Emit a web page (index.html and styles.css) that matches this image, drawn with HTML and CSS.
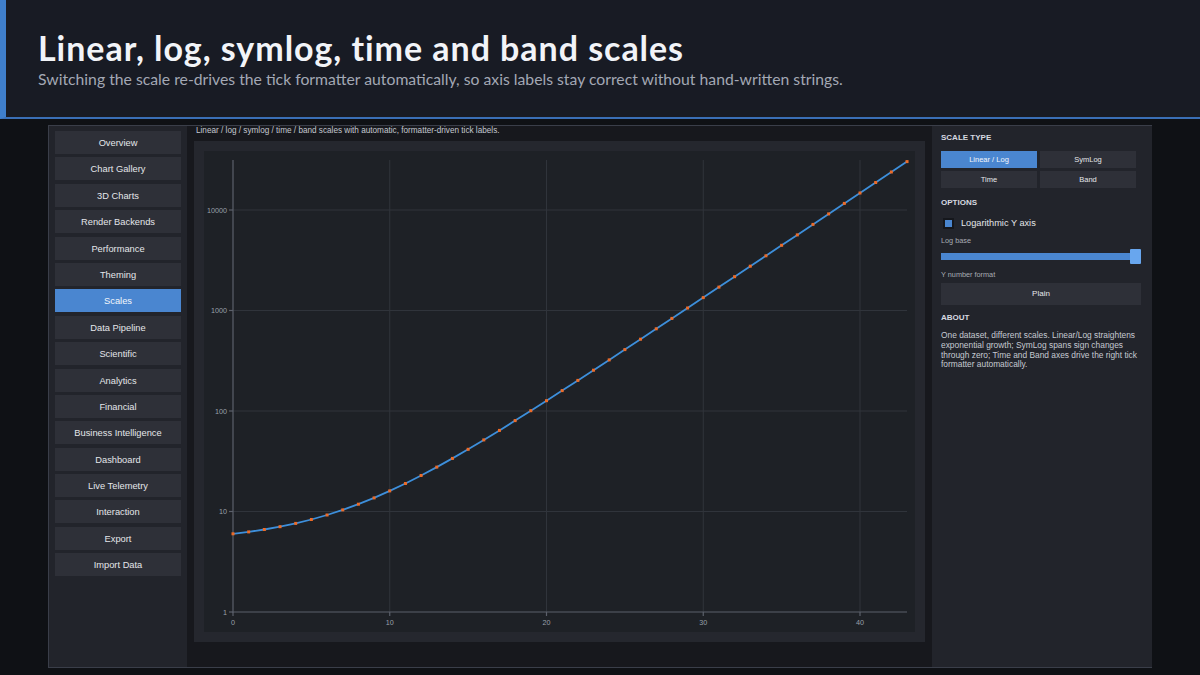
FILE: index.html
```html
<!DOCTYPE html>
<html>
<head>
<meta charset="utf-8">
<title>Scales</title>
<link rel="stylesheet" href="styles.css">
</head>
<body>
<header class="hero">
  <h1 class="hero-title">Linear, log, symlog, time and band scales</h1>
  <p class="hero-sub">Switching the scale re-drives the tick formatter automatically, so axis labels stay correct without hand-written strings.</p>
</header>
<div class="window">
  <nav class="sidebar">
    <div class="nav-btn">Overview</div>
    <div class="nav-btn">Chart Gallery</div>
    <div class="nav-btn">3D Charts</div>
    <div class="nav-btn">Render Backends</div>
    <div class="nav-btn">Performance</div>
    <div class="nav-btn">Theming</div>
    <div class="nav-btn active">Scales</div>
    <div class="nav-btn">Data Pipeline</div>
    <div class="nav-btn">Scientific</div>
    <div class="nav-btn">Analytics</div>
    <div class="nav-btn">Financial</div>
    <div class="nav-btn">Business Intelligence</div>
    <div class="nav-btn">Dashboard</div>
    <div class="nav-btn">Live Telemetry</div>
    <div class="nav-btn">Interaction</div>
    <div class="nav-btn">Export</div>
    <div class="nav-btn">Import Data</div>
  </nav>
  <main class="main">
    <div class="caption">Linear / log / symlog / time / band scales with automatic, formatter-driven tick labels.</div>
    <div class="chart-panel">
      <svg class="plot" width="711" height="481" viewBox="0 0 711 481">
        <g class="grid">
          <line x1="29" y1="59" x2="703" y2="59"/>
          <line x1="29" y1="159.5" x2="703" y2="159.5"/>
          <line x1="29" y1="260" x2="703" y2="260"/>
          <line x1="29" y1="360.5" x2="703" y2="360.5"/>
          <line x1="185.75" y1="9" x2="185.75" y2="461"/>
          <line x1="342.5" y1="9" x2="342.5" y2="461"/>
          <line x1="499.25" y1="9" x2="499.25" y2="461"/>
          <line x1="656" y1="9" x2="656" y2="461"/>
        </g>
        <g class="axis">
          <line x1="29" y1="9" x2="29" y2="461.5"/>
          <line x1="28.5" y1="461" x2="703" y2="461"/>
          <line x1="25" y1="59" x2="29" y2="59"/>
          <line x1="25" y1="159.5" x2="29" y2="159.5"/>
          <line x1="25" y1="260" x2="29" y2="260"/>
          <line x1="25" y1="360.5" x2="29" y2="360.5"/>
          <line x1="25" y1="461" x2="29" y2="461"/>
          <line x1="29" y1="461" x2="29" y2="465"/>
          <line x1="185.75" y1="461" x2="185.75" y2="465"/>
          <line x1="342.5" y1="461" x2="342.5" y2="465"/>
          <line x1="499.25" y1="461" x2="499.25" y2="465"/>
          <line x1="656" y1="461" x2="656" y2="465"/>
        </g>
        <g class="ticklabels ylabels">
          <text x="23" y="61.6">10000</text>
          <text x="23" y="162.1">1000</text>
          <text x="23" y="262.6">100</text>
          <text x="23" y="363.1">10</text>
          <text x="23" y="463.6">1</text>
        </g>
        <g class="ticklabels xlabels">
          <text x="29" y="474">0</text>
          <text x="185.75" y="474">10</text>
          <text x="342.5" y="474">20</text>
          <text x="499.25" y="474">30</text>
          <text x="656" y="474">40</text>
        </g>
        <polyline class="series" points="29,382.8 44.68,380.9 60.35,378.5 76.03,375.7 91.7,372.4 107.38,368.5 123.05,364 138.73,358.9 154.4,353.2 170.08,346.9 185.75,339.9 201.43,332.5 217.1,324.5 232.78,316.1 248.45,307.4 264.13,298.3 279.8,288.9 295.48,279.4 311.15,269.6 326.83,259.7 342.5,249.7 358.18,239.6 373.85,229.4 389.53,219.2 405.2,208.9 420.88,198.6 436.55,188.2 452.23,177.8 467.9,167.4 483.58,157 499.25,146.6 514.93,136.1 530.6,125.7 546.28,115.2 561.95,104.8 577.63,94.3 593.3,83.9 608.98,73.4 624.65,62.9 640.33,52.4 656,42 671.68,31.5 687.35,21 703.03,10.6"/>
        <g class="markers">
          <rect x="27.5" y="381.3" width="3" height="3"/>
          <rect x="43.18" y="379.4" width="3" height="3"/>
          <rect x="58.85" y="377" width="3" height="3"/>
          <rect x="74.53" y="374.2" width="3" height="3"/>
          <rect x="90.2" y="370.9" width="3" height="3"/>
          <rect x="105.88" y="367" width="3" height="3"/>
          <rect x="121.55" y="362.5" width="3" height="3"/>
          <rect x="137.23" y="357.4" width="3" height="3"/>
          <rect x="152.9" y="351.7" width="3" height="3"/>
          <rect x="168.58" y="345.4" width="3" height="3"/>
          <rect x="184.25" y="338.4" width="3" height="3"/>
          <rect x="199.93" y="331" width="3" height="3"/>
          <rect x="215.6" y="323" width="3" height="3"/>
          <rect x="231.28" y="314.6" width="3" height="3"/>
          <rect x="246.95" y="305.9" width="3" height="3"/>
          <rect x="262.63" y="296.8" width="3" height="3"/>
          <rect x="278.3" y="287.4" width="3" height="3"/>
          <rect x="293.98" y="277.9" width="3" height="3"/>
          <rect x="309.65" y="268.1" width="3" height="3"/>
          <rect x="325.33" y="258.2" width="3" height="3"/>
          <rect x="341" y="248.2" width="3" height="3"/>
          <rect x="356.68" y="238.1" width="3" height="3"/>
          <rect x="372.35" y="227.9" width="3" height="3"/>
          <rect x="388.03" y="217.7" width="3" height="3"/>
          <rect x="403.7" y="207.4" width="3" height="3"/>
          <rect x="419.38" y="197.1" width="3" height="3"/>
          <rect x="435.05" y="186.7" width="3" height="3"/>
          <rect x="450.73" y="176.3" width="3" height="3"/>
          <rect x="466.4" y="165.9" width="3" height="3"/>
          <rect x="482.08" y="155.5" width="3" height="3"/>
          <rect x="497.75" y="145.1" width="3" height="3"/>
          <rect x="513.43" y="134.6" width="3" height="3"/>
          <rect x="529.1" y="124.2" width="3" height="3"/>
          <rect x="544.78" y="113.7" width="3" height="3"/>
          <rect x="560.45" y="103.3" width="3" height="3"/>
          <rect x="576.13" y="92.8" width="3" height="3"/>
          <rect x="591.8" y="82.4" width="3" height="3"/>
          <rect x="607.48" y="71.9" width="3" height="3"/>
          <rect x="623.15" y="61.4" width="3" height="3"/>
          <rect x="638.83" y="50.9" width="3" height="3"/>
          <rect x="654.5" y="40.5" width="3" height="3"/>
          <rect x="670.18" y="30" width="3" height="3"/>
          <rect x="685.85" y="19.5" width="3" height="3"/>
          <rect x="701.53" y="9.1" width="3" height="3"/>
        </g>
      </svg>
    </div>
  </main>
  <aside class="inspector">
    <div class="section-title first">SCALE TYPE</div>
    <div class="seg-grid">
      <div class="seg-btn active">Linear / Log</div>
      <div class="seg-btn">SymLog</div>
      <div class="seg-btn">Time</div>
      <div class="seg-btn">Band</div>
    </div>
    <div class="section-title options">OPTIONS</div>
    <div class="check-row">
      <span class="checkbox"></span>
      <span class="check-label">Logarithmic Y axis</span>
    </div>
    <div class="field-label log-label">Log base</div>
    <div class="slider">
      <div class="slider-track"></div>
      <div class="slider-thumb"></div>
    </div>
    <div class="field-label fmt-label">Y number format</div>
    <div class="select-btn">Plain</div>
    <div class="section-title about">ABOUT</div>
    <p class="about-text">One dataset, different scales. Linear/Log straightens exponential growth; SymLog spans sign changes through zero; Time and Band axes drive the right tick formatter automatically.</p>
  </aside>
</div>
</body>
</html>
```
FILE: styles.css
```css
* { box-sizing: border-box; }
html, body {
  margin: 0;
  padding: 0;
}
body {
  width: 1200px;
  height: 675px;
  overflow: hidden;
  background: #0f1115;
  font-family: "Liberation Sans", Arial, sans-serif;
}
.hero {
  height: 119px;
  background: #181b24;
  border-left: 6px solid #3f7fcc;
  border-bottom: 2px solid #3a6fb6;
  padding: 28px 0 0 32px;
}
.hero-title {
  margin: 0;
  font-family: Lato, "Noto Sans", sans-serif;
  font-weight: 700;
  font-size: 34px;
  letter-spacing: 0.95px;
  line-height: 40px;
  color: #f2f4f8;
}
.hero-sub {
  margin: 1px 0 0 0;
  font-family: Lato, "Noto Sans", sans-serif;
  font-size: 15.75px;
  line-height: 20px;
  color: #a3a8b4;
}
.window {
  margin: 6px 0 0 48px;
  width: 1104px;
  height: 543px;
  border: 1px solid #3a3e49;
  display: flex;
  background: #17181d;
}
.sidebar {
  width: 138px;
  flex: none;
  background: #22242b;
  padding: 5px 6px;
  display: flex;
  flex-direction: column;
  gap: 3.4px;
}
.nav-btn {
  height: 23px;
  background: #2e3038;
  color: #e4e6ea;
  font-size: 9.3px;
  line-height: 24px;
  text-align: center;
}
.nav-btn.active {
  background: #4a86d0;
  color: #f4f7fb;
}
.main {
  width: 745px;
  flex: none;
  padding: 0 7px;
  background: #17181d;
}
.caption {
  height: 10px;
  margin: 0 0 5px 2px;
  font-size: 8.2px;
  line-height: 10px;
  color: #c4c8d0;
  white-space: nowrap;
}
.chart-panel {
  width: 731px;
  height: 501px;
  padding: 10px;
  background: #25272e;
}
.plot {
  display: block;
  background: #1e2126;
}
.grid line {
  stroke: #30343b;
  stroke-width: 1;
}
.axis line {
  stroke: #5b606b;
  stroke-width: 1.2;
}
.ticklabels text {
  font-family: "Liberation Sans", Arial, sans-serif;
  font-size: 7.2px;
  fill: #9aa0aa;
}
.ylabels text { text-anchor: end; }
.xlabels text { text-anchor: middle; }
.series {
  fill: none;
  stroke: #3d8fdb;
  stroke-width: 1.8;
  stroke-linejoin: round;
}
.markers rect {
  fill: #ec6b28;
}
.inspector {
  flex: 1;
  background: #22242b;
  padding: 7px 9px 0 9px;
  color: #d6d9e0;
}
.section-title {
  font-size: 8px;
  font-weight: 700;
  line-height: 10px;
  color: #d6d9e0;
}
.seg-grid {
  margin-top: 8px;
  width: 195px;
  display: grid;
  grid-template-columns: 96px 96px;
  grid-auto-rows: 17px;
  gap: 3px;
}
.seg-btn {
  background: #2e3038;
  color: #e4e6ea;
  font-size: 7.5px;
  line-height: 17px;
  text-align: center;
}
.seg-btn.active {
  background: #4a86d0;
  color: #f4f7fb;
}
.section-title.options { margin-top: 10px; }
.check-row {
  margin-top: 9.5px;
  height: 11px;
  display: flex;
  align-items: center;
  padding-left: 2px;
}
.checkbox {
  width: 11px;
  height: 11px;
  background: #4a86d0;
  border: 2px solid #15171c;
  flex: none;
}
.check-label {
  margin-left: 7px;
  font-size: 9.2px;
  line-height: 11px;
  color: #e4e6ea;
}
.field-label {
  font-size: 7.3px;
  line-height: 9px;
  color: #a8acb4;
}
.log-label { margin-top: 7.3px; }
.slider {
  margin-top: 4.5px;
  height: 15px;
  width: 200px;
  display: flex;
  align-items: center;
  position: relative;
}
.slider-track {
  width: 199px;
  height: 7px;
  background: #4a86d0;
}
.slider-thumb {
  position: absolute;
  left: 189px;
  top: 0;
  width: 11px;
  height: 15px;
  background: #68a6ee;
  border-radius: 1px;
}
.fmt-label { margin-top: 5.5px; }
.select-btn {
  margin-top: 4px;
  width: 200px;
  height: 22px;
  background: #2e3038;
  color: #e4e6ea;
  font-size: 8px;
  line-height: 22px;
  text-align: center;
}
.section-title.about { margin-top: 8.5px; }
.about-text {
  margin: 7.8px 0 0 0;
  width: 202px;
  font-size: 8.4px;
  line-height: 9.8px;
  color: #c6cad2;
}
```
